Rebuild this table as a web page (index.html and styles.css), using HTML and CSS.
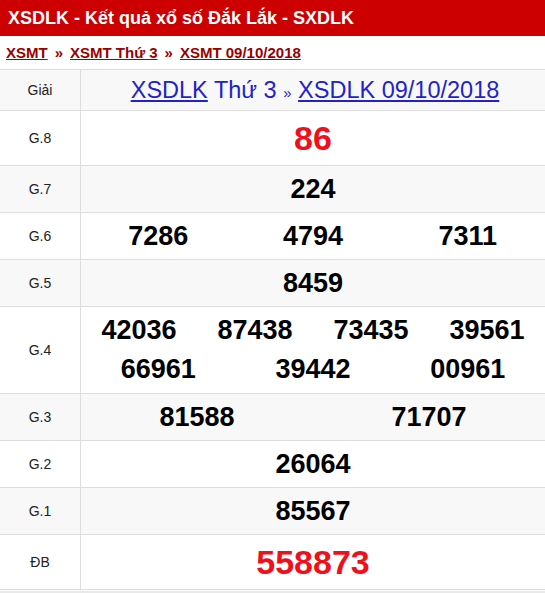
FILE: index.html
```html
<!DOCTYPE html>
<html lang="vi">
<head>
<meta charset="utf-8">
<title>XSDLK</title>
<link rel="stylesheet" href="styles.css">
</head>
<body>
<h1 class="title">XSDLK - Kết quả xổ số Đắk Lắk - SXDLK</h1>
<nav class="crumbs">
  <a href="#">XSMT</a><span class="sep">»</span><a href="#">XSMT Thứ 3</a><span class="sep">»</span><a href="#">XSMT 09/10/2018</a>
</nav>
<div class="table">
  <div class="row head alt">
    <div class="label">Giải</div>
    <div class="cell"><span class="hlinks"><a href="#">XSDLK</a> Thứ 3 <span class="small">»</span> <a href="#">XSDLK 09/10/2018</a></span></div>
  </div>
  <div class="row tall">
    <div class="label">G.8</div>
    <div class="cell"><div class="line"><span class="num big red">86</span></div></div>
  </div>
  <div class="row alt">
    <div class="label">G.7</div>
    <div class="cell"><div class="line"><span class="num">224</span></div></div>
  </div>
  <div class="row">
    <div class="label">G.6</div>
    <div class="cell"><div class="line"><span class="num">7286</span><span class="num">4794</span><span class="num">7311</span></div></div>
  </div>
  <div class="row alt">
    <div class="label">G.5</div>
    <div class="cell"><div class="line"><span class="num">8459</span></div></div>
  </div>
  <div class="row g4">
    <div class="label">G.4</div>
    <div class="cell">
      <div class="line"><span class="num">42036</span><span class="num">87438</span><span class="num">73435</span><span class="num">39561</span></div>
      <div class="line"><span class="num">66961</span><span class="num">39442</span><span class="num">00961</span></div>
    </div>
  </div>
  <div class="row alt">
    <div class="label">G.3</div>
    <div class="cell"><div class="line"><span class="num">81588</span><span class="num">71707</span></div></div>
  </div>
  <div class="row">
    <div class="label">G.2</div>
    <div class="cell"><div class="line"><span class="num">26064</span></div></div>
  </div>
  <div class="row alt">
    <div class="label">G.1</div>
    <div class="cell"><div class="line"><span class="num">85567</span></div></div>
  </div>
  <div class="row tall">
    <div class="label">ĐB</div>
    <div class="cell"><div class="line"><span class="num big red">558873</span></div></div>
  </div>
</div>
<div class="foot"></div>
</body>
</html>
```
FILE: styles.css
```css
html, body {
  margin: 0;
  padding: 0;
  background: #fff;
  font-family: "Liberation Sans", Arial, sans-serif;
  overflow: hidden;
}
.title {
  margin: 0;
  height: 36px;
  line-height: 36px;
  padding-left: 8px;
  background: #cc0000;
  color: #fff;
  font-size: 18px;
  font-weight: bold;
}
.crumbs {
  height: 33px;
  line-height: 33px;
  padding-left: 6px;
  font-size: 15px;
  font-weight: bold;
  color: #990000;
}
.crumbs a {
  color: #990000;
  text-decoration: underline;
}
.crumbs .sep {
  margin: 0 7px;
}
.table {
  border-top: 1px solid #dddddd;
}
.row {
  display: flex;
  height: 46px;
  border-bottom: 1px solid #dddddd;
  background: #fff;
}
.row.alt {
  background: #f8f8f8;
}
.row.head {
  height: 40px;
}
.row.tall {
  height: 54px;
}
.row.g4 {
  height: 86px;
}
.label {
  width: 80px;
  flex: none;
  border-right: 1px solid #dddddd;
  display: flex;
  align-items: center;
  justify-content: center;
  font-size: 14px;
  color: #222;
}
.cell {
  flex: 1;
  display: flex;
  flex-direction: column;
  justify-content: center;
}
.head .cell {
  align-items: center;
}
.hlinks {
  font-size: 23.5px;
  color: #2222cc;
  padding-left: 4px;
}
.hlinks a {
  color: #2222cc;
  text-decoration: underline;
}
.hlinks .small {
  font-size: 15px;
}
.line {
  display: flex;
  height: 39px;
  align-items: center;
}
.num {
  flex: 1;
  text-align: center;
  font-size: 27px;
  font-weight: bold;
  color: #000;
}
.num.big {
  font-size: 34px;
}
.num.red {
  color: #f0101c;
}
.foot {
  height: 10px;
  background: #e9e9e9;
  margin-top: 1px;
}
```
